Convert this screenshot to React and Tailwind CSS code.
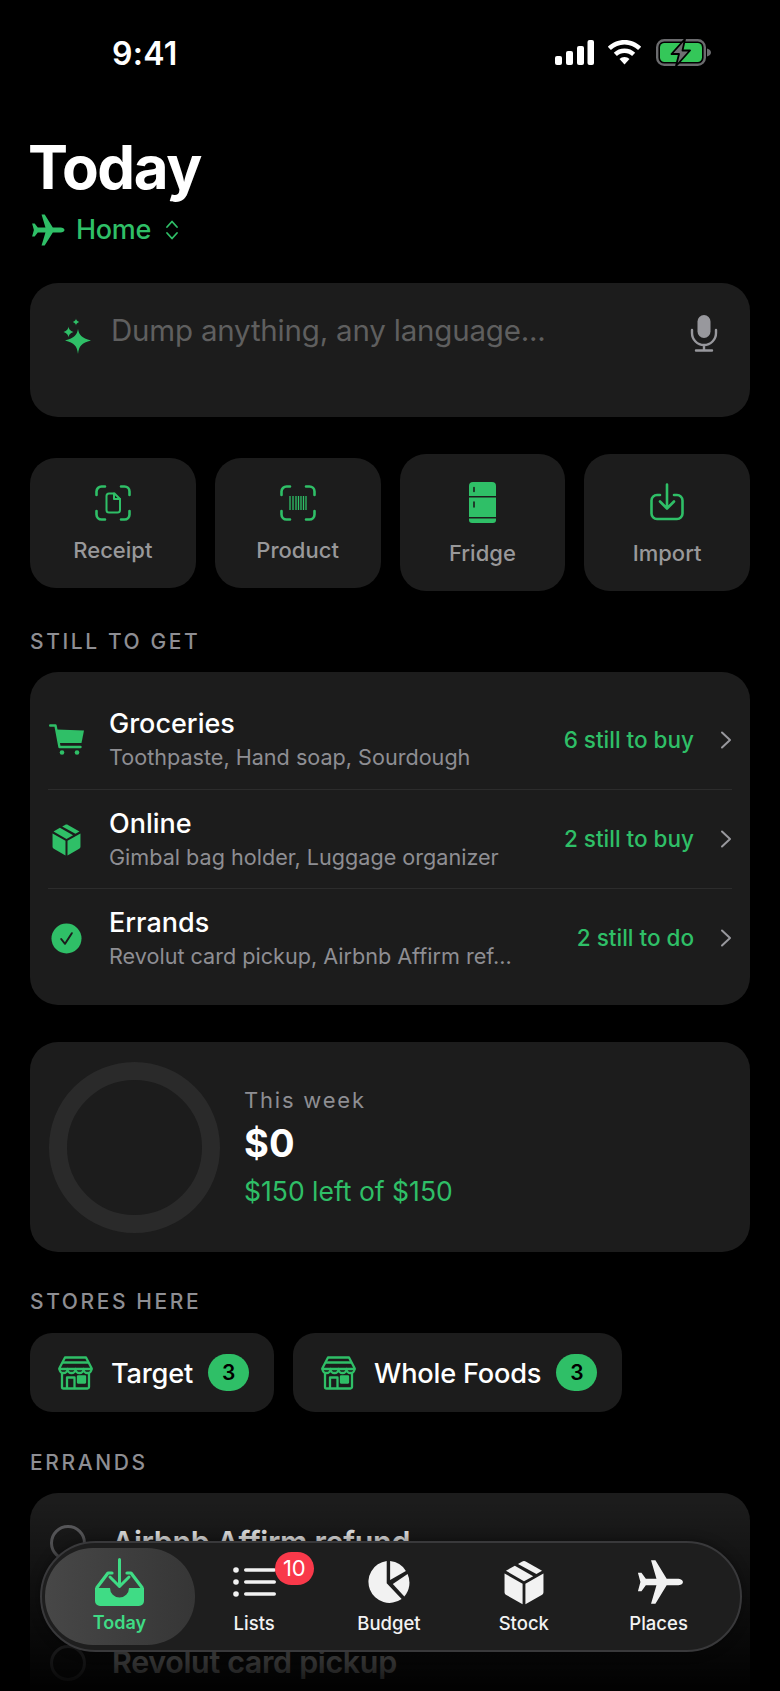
const PLANE = 'M23 12c0-1-1.2-1.6-2.6-1.6h-5.2L9.8 1.6H7.7l2.6 8.8H5.2L3.1 7.6H1.4l1.2 4.4-1.2 4.4h1.7l2.1-2.8h5.1l-2.6 8.8h2.1l5.4-8.8h5.2c1.4 0 2.6-.6 2.6-1.6z'

const Plane = ({ className }) => (
  <svg viewBox="0 0 24 24" className={className} fill="currentColor">
    <path d={PLANE} />
  </svg>
)

const BoxFill = ({ className }) => (
  <svg viewBox="0 0 24 26" className={className} fill="currentColor">
    <path d="M1 8.2l10.2 5.8V25.6L2 20.3c-.7-.4-1-.9-1-1.7z" />
    <path d="M23 8.2l-10.2 5.8V25.6L22 20.3c.7-.4 1-.9 1-1.7z" />
    <path d="M1.8 6.6L6.8 3.8l10.4 5.9-5.2 2.9z" />
    <path d="M8.6 2.8l2.2-1.3c.8-.4 1.600-.4 2.400 0l9 5.100-3.200 1.900z" />
  </svg>
)

const PieFill = ({ className }) => (
  <svg viewBox="0 0 24 24" className={className} fill="currentColor">
    <path d="M10.8 1A11 11 0 1 0 18.6 20.9L10.8 12.6z" />
    <path d="M12.6 1.1A11 11 0 0 1 20.8 6.2L12.6 10.9z" />
    <path d="M21.7 7.8A11 11 0 0 1 20 19.5L14 13z" />
  </svg>
)

const Sparkles = ({ className }) => (
  <svg viewBox="0 0 30 36" className={className} fill="currentColor">
    <path d="M16 11c1 6 3.500 9 13 11.500-9.500 2.500-12 5.500-13 13.500-1-8-3.500-11-13-13.500C12.500 20 15 17 16 11z" />
    <path d="M6.500 8.500c.4 2.700 1.300 4 5 5.500-3.700 1.500-4.600 2.800-5 5.500-.4-2.700-1.300-4-5-5.500 3.700-1.500 4.600-2.800 5-5.500z" />
    <path d="M14 .5c.3 1.800.9 2.600 3.200 3.500-2.300.9-2.900 1.700-3.200 3.500-.3-1.800-.9-2.600-3.200-3.500C13.100 3.100 13.700 2.300 14 .5z" />
  </svg>
)

const Mic = ({ className }) => (
  <svg viewBox="0 0 28 38" className={className} fill="none" stroke="currentColor" strokeWidth="2.400" strokeLinecap="round">
    <rect x="7.500" y="1" width="13" height="23" rx="6.500" fill="currentColor" stroke="none" />
    <path d="M2 16v3a12 12 0 0 0 24 0v-3M14 31v5M6 36.500h16" />
  </svg>
)

const ScanFrame = ({ children, className }) => (
  <svg viewBox="0 0 36 36" className={className} fill="none" stroke="currentColor" strokeWidth="2.600" strokeLinecap="round" strokeLinejoin="round">
    <path d="M10 1.500H6.500a5 5 0 0 0-5 5V10M26 1.500h3.500a5 5 0 0 1 5 5V10M10 34.500H6.500a5 5 0 0 1-5-5V26M26 34.500h3.500a5 5 0 0 0 5-5V26" />
    {children}
  </svg>
)

const Fridge = ({ className }) => (
  <svg viewBox="0 0 27 41" className={className}>
    <path fill="currentColor" d="M4 0h19a4 4 0 0 1 4 4v10H0V4a4 4 0 0 1 4-4z" />
    <path fill="currentColor" d="M0 15.500h27V35H0z" />
    <path fill="currentColor" d="M0 36.500h27V38a3 3 0 0 1-3 3H3a3 3 0 0 1-3-3z" />
    <path stroke="#1c1c1c" strokeWidth="1.600" strokeLinecap="round" d="M5 5.500v4M5 20v5" />
  </svg>
)

const Import = ({ className }) => (
  <svg viewBox="0 0 34 38" className={className} fill="none" stroke="currentColor" strokeWidth="2.600" strokeLinecap="round" strokeLinejoin="round">
    <path d="M10 12H7a5.500 5.500 0 0 0-5.500 5.500v13A5.500 5.500 0 0 0 7 36h20a5.500 5.500 0 0 0 5.500-5.500v-13A5.500 5.500 0 0 0 27 12h-3" />
    <path d="M17 1.500V25M10 18.500l7 7 7-7" />
  </svg>
)

const Cart = ({ className }) => (
  <svg viewBox="0 0 35 31" className={className}>
    <path fill="none" stroke="currentColor" strokeWidth="2.400" strokeLinecap="round" strokeLinejoin="round" d="M1.200 1.500H6.500l4 21.500h21" />
    <path fill="currentColor" d="M7.500 5.500L35 6.500 32.500 19H10z" />
    <circle cx="13" cy="28.500" r="2.300" fill="currentColor" />
    <circle cx="28" cy="28.500" r="2.300" fill="currentColor" />
  </svg>
)

const CheckFill = ({ className }) => (
  <svg viewBox="0 0 32 32" className={className}>
    <circle cx="16" cy="16" r="15.500" fill="currentColor" />
    <path d="M10.500 16.500l4 5 7-11" fill="none" stroke="#1c1c1c" strokeWidth="2" strokeLinecap="round" strokeLinejoin="round" />
  </svg>
)

const Chevron = ({ className }) => (
  <svg viewBox="0 0 12 18" className={className} fill="none" stroke="currentColor" strokeWidth="2" strokeLinecap="round" strokeLinejoin="round">
    <path d="M2 1.500L10 9l-8 7.500" />
  </svg>
)

const Store = ({ className }) => (
  <svg viewBox="0 0 35 34" className={className} fill="none" stroke="currentColor" strokeWidth="2.300" strokeLinecap="round" strokeLinejoin="round">
    <path d="M7 1.500h21l5.500 10.500a2 2 0 0 1 0 1H1.500a2 2 0 0 1 0-1z" />
    <path d="M5 6.500h25" />
    <path d="M1.500 13a4 4 0 0 0 8 0 4 4 0 0 0 8 0 4 4 0 0 0 8 0 4 4 0 0 0 8 0" />
    <path d="M4 17.500V31a1.500 1.500 0 0 0 1.500 1.500h24A1.500 1.500 0 0 0 31 31V17.500" />
    <path d="M9 32V21.500h7.500V32" />
    <rect x="20" y="20.500" width="7" height="6" fill="currentColor" />
  </svg>
)

const InboxFill = ({ className }) => (
  <svg viewBox="0 0 49 48" className={className}>
    <path fill="currentColor" d="M0 30h15a9.500 9.500 0 0 0 19 0h15v13a5 5 0 0 1-5 5H5a5 5 0 0 1-5-5z" />
    <path fill="none" stroke="currentColor" strokeWidth="3.200" strokeLinecap="round" strokeLinejoin="round" d="M17 15h-4L2 29.500M32 15h4l11 14.500" />
    <path fill="none" stroke="currentColor" strokeWidth="3" strokeLinecap="round" strokeLinejoin="round" d="M24.500 1.500V28M15 19l9.500 9.500L34 19" />
  </svg>
)

const ListIcon = ({ className }) => (
  <svg viewBox="0 0 43 30" className={className} fill="currentColor">
    <circle cx="3" cy="3" r="2.800" />
    <circle cx="3" cy="15" r="2.800" />
    <circle cx="3" cy="27" r="2.800" />
    <rect x="11" y="1.300" width="32" height="3.400" rx="1.700" />
    <rect x="11" y="13.300" width="32" height="3.400" rx="1.700" />
    <rect x="11" y="25.300" width="32" height="3.400" rx="1.700" />
  </svg>
)

const StatusIcons = () => (
  <div className="flex items-center mt-[3px] text-white">
    <svg viewBox="0 0 39 25" className="w-[39px] h-[25px]" fill="currentColor">
      <rect x="0" y="16" width="7" height="9" rx="2" />
      <rect x="11" y="11" width="7" height="14" rx="2" />
      <rect x="22" y="6" width="7" height="19" rx="2" />
      <rect x="32.500" y="0" width="6.500" height="25" rx="2" />
    </svg>
    <svg viewBox="0 0 35 25" className="w-[35px] h-[25px] ml-[13px]" fill="currentColor">
      <path d="M17.500 0C11 0 5.200 2.600.8 6.700l3.100 3.200C7.500 6.600 12.300 4.500 17.500 4.500s10 2.100 13.600 5.400l3.100-3.200C29.800 2.600 24 0 17.500 0z" />
      <path d="M17.500 8.500c-4.100 0-7.900 1.600-10.700 4.200l3.100 3.200c2-1.900 4.700-3 7.600-3s5.600 1.100 7.600 3l3.100-3.200c-2.800-2.600-6.600-4.200-10.700-4.200z" />
      <path d="M17.500 17c-2 0-3.700.8-5 2l5 5.500 5-5.500c-1.300-1.200-3-2-5-2z" />
    </svg>
    <svg viewBox="0 0 56 27" className="w-[56px] h-[27px] ml-[14px]">
      <rect x="1.200" y="1.200" width="47.600" height="24.600" rx="7" fill="none" stroke="#6b6b6e" strokeWidth="2.400" />
      <rect x="4" y="4" width="42" height="19" rx="4.500" fill="#34c759" />
      <path d="M51 9.500c2.500.7 4 2.200 4 4s-1.500 3.300-4 4z" fill="#6b6b6e" />
      <path d="M29 0L15.500 15h7.500L20 27l14-15.500h-7.500z" fill="#6f6f72" stroke="#000" strokeWidth="1.800" strokeLinejoin="round" />
    </svg>
  </div>
)

const quickActions = [
  { label: 'Receipt', tall: false },
  { label: 'Product', tall: false },
  { label: 'Fridge', tall: true },
  { label: 'Import', tall: true },
]

const quickIcon = (label) => {
  if (label === 'Receipt') {
    return (
      <ScanFrame className="w-[36px] h-[36px] text-[#2fbf67]">
        <path d="M11.500 11a2.500 2.500 0 0 1 2.500-2.500h5.500L25 14v11a2.500 2.500 0 0 1-2.500 2.500H14a2.500 2.500 0 0 1-2.500-2.500z" strokeWidth="2" />
        <path d="M19 8.500V14h6" strokeWidth="2" />
      </ScanFrame>
    )
  }
  if (label === 'Product') {
    return (
      <ScanFrame className="w-[36px] h-[36px] text-[#2fbf67]">
        <path d="M10 11v14M13 11v14M16 11v14M18.500 11v14M21 11v14M23.500 11v14M26 11v14" strokeWidth="1.300" strokeLinecap="butt" />
      </ScanFrame>
    )
  }
  if (label === 'Fridge') return <Fridge className="w-[27px] h-[41px] text-[#2fbf67]" />
  return <Import className="w-[34px] h-[38px] text-[#2fbf67]" />
}

const stillToGet = [
  { title: 'Groceries', sub: 'Toothpaste, Hand soap, Sourdough', right: '6 still to buy', icon: <Cart className="w-[35px] h-[31px]" /> },
  { title: 'Online', sub: 'Gimbal bag holder, Luggage organizer', right: '2 still to buy', icon: <BoxFill className="ml-[2px] w-[31px] h-[33px]" /> },
  { title: 'Errands', sub: 'Revolut card pickup, Airbnb Affirm ref...', right: '2 still to do', icon: <CheckFill className="ml-[2px] w-[31px] h-[31px]" /> },
]

const tabs = [
  { label: 'Lists', icon: <ListIcon className="w-[43px] h-[30px]" /> },
  { label: 'Budget', icon: <PieFill className="w-[46px] h-[46px]" /> },
  { label: 'Stock', icon: <BoxFill className="w-[44px] h-[46px]" /> },
  { label: 'Places', icon: <Plane className="ml-[3px] w-[50px] h-[50px]" /> },
]

const SectionLabel = ({ children, className }) => (
  <div className={`text-[21px] leading-[20px] tracking-[2.6px] font-medium text-[#8e8e93] ${className}`}>
    {children}
  </div>
)

export default function App() {
  return (
    <div className="relative w-[780px] h-[1691px] overflow-hidden bg-black text-white font-['Inter','Noto_Sans',sans-serif]">
      <div className="flex items-start justify-between pt-[36px] pl-[112px] pr-[68px] h-[135px]">
        <div className="text-[32px] leading-[36px] font-semibold tracking-[0.3px]">9:41</div>
        <StatusIcons />
      </div>

      <div className="px-[30px]">
        <h1 className="-ml-[2px] text-[60px] leading-[65px] font-bold tracking-[-1.400px]">Today</h1>
        <div className="flex items-center h-[30px] mt-[15px] text-[#2fbf67]">
          <Plane className="w-[36px] h-[36px]" />
          <span className="ml-[10px] text-[27px] font-medium tracking-[-0.300px]">Home</span>
          <svg viewBox="0 0 14 20" className="w-[14px] h-[20px] ml-[14px]" fill="none" stroke="currentColor" strokeWidth="1.800" strokeLinecap="round" strokeLinejoin="round">
            <path d="M2 7l5-5.500L12 7M2 13l5 5.500 5-5.500" />
          </svg>
        </div>

        <div className="flex items-start justify-between h-[134px] mt-[38px] rounded-[28px] bg-[#1c1c1c] pt-[29px] pl-[32px] pr-[32px]">
          <div className="flex items-start">
            <Sparkles className="w-[30px] h-[36px] text-[#2fbf67] mt-[6px]" />
            <span className="ml-[19px] text-[29.500px] leading-[36px] text-[#5f5f5f] tracking-[-0.200px]">Dump anything, any language...</span>
          </div>
          <Mic className="w-[28px] h-[38px] text-[#98989d] mt-[2px]" />
        </div>

        <div className="grid grid-cols-4 gap-[19px] h-[137px] mt-[37px] items-center">
          {quickActions.map((a) => (
            <div
              key={a.label}
              className={`flex flex-col items-center rounded-[26px] bg-[#1c1c1c] ${a.tall ? 'h-[137px] pt-[27px]' : 'h-[130px] pt-[24px]'}`}
            >
              <div className="flex items-center justify-center h-[42px]">{quickIcon(a.label)}</div>
              <div className={`text-[22px] leading-[28px] font-medium text-[#98989a] ${a.tall ? 'mt-[16px]' : 'mt-[12px]'}`}>{a.label}</div>
            </div>
          ))}
        </div>

        <SectionLabel className="mt-[41px]">STILL TO GET</SectionLabel>

        <div className="mt-[20px] h-[333px] rounded-[28px] bg-[#1c1c1c] px-[18px] pt-[18px]">
          {stillToGet.map((row, i) => (
            <div
              key={row.title}
              className={`flex items-center h-[99px] ${i > 0 ? 'border-t border-[#2c2c2c]' : ''}`}
            >
              <div className="w-[61px] pl-[1px] flex justify-start text-[#2fbf67]">{row.icon}</div>
              <div className="flex-1 min-w-0">
                <div className="text-[27px] leading-[32px] font-medium">{row.title}</div>
                <div className="text-[21.600px] leading-[28px] mt-[3px] text-[#8e8e93] whitespace-nowrap">{row.sub}</div>
              </div>
              <div className="text-[22.500px] font-medium text-[#2fbf67]">{row.right}</div>
              <Chevron className="w-[12px] h-[18px] ml-[26px] text-[#98989d]" />
            </div>
          ))}
        </div>

        <div className="flex items-center h-[210px] mt-[37px] rounded-[28px] bg-[#1c1c1c] pl-[19px]">
          <div className="w-[171px] h-[171px] rounded-full border-[18px] border-[#2a2a2a]" />
          <div className="ml-[24px] -mt-[2px]">
            <div className="text-[22px] leading-[28px] tracking-[1.800px] text-[#8e8e93]">This week</div>
            <div className="text-[38px] leading-[44px] mt-[7px] font-bold">$0</div>
            <div className="text-[26.500px] leading-[32px] mt-[10px] text-[#2fbf67]">$150 left of $150</div>
          </div>
        </div>

        <SectionLabel className="mt-[40px]">STORES HERE</SectionLabel>

        <div className="flex gap-[19px] mt-[21px]">
          {['Target', 'Whole Foods'].map((s) => (
            <div key={s} className="flex items-center h-[79px] rounded-[22px] bg-[#1c1c1c] pl-[28px] pr-[25px]">
              <Store className="w-[35px] h-[34px] text-[#2fbf67]" />
              <span className="ml-[18px] mt-[3px] text-[27.200px] font-medium tracking-[-0.200px]">{s}</span>
              <span className="ml-[15px] flex items-center justify-center w-[41px] h-[37px] rounded-full bg-[#2fbf67] text-[21px] font-semibold text-black">3</span>
            </div>
          ))}
        </div>

        <SectionLabel className="mt-[41px]">ERRANDS</SectionLabel>

        <div className="mt-[20px] h-[260px] rounded-[28px] bg-[#1c1c1c] pt-[20px] pl-[20px]">
          {['Airbnb Affirm refund', '', 'Revolut card pickup'].map((t, i) => (
            <div key={i} className="flex items-center h-[60px]">
              <div className="w-[36px] h-[36px] rounded-full border-[3px] border-[#636366]" />
              <span className="ml-[26px] text-[30.400px] font-semibold tracking-[-0.300px]">{t}</span>
            </div>
          ))}
        </div>
      </div>

      <div className="absolute left-0 right-0 top-[1500px] h-[191px] bg-gradient-to-b from-transparent to-black/95" />

      <div className="absolute left-[40px] top-[1541px] w-[702px] h-[111px] rounded-[56px] border-2 border-[#39393b] bg-[#1e1e1e] pl-[10px] pr-[14px] grid grid-cols-5 shadow-[0_0_12px_rgba(0,0,0,0.4)]">
        <div className="relative flex flex-col items-center">
          <div className="absolute -left-[7px] top-[5px] w-[150px] h-[97px] rounded-[48px] bg-gradient-to-r from-[#474747] to-[#363636]" />
          <InboxFill className="relative w-[49px] h-[48px] mt-[15px] text-[#3fdc85]" />
          <span className="relative mt-[5px] text-[18px] leading-[24px] font-semibold text-[#3fdc85]">Today</span>
        </div>
        {tabs.map((t) => (
          <div key={t.label} className="relative flex flex-col items-center">
            <div className="flex items-center justify-center h-[48px] mt-[15px] text-[#f2f2f2]">{t.icon}</div>
            {t.label === 'Lists' && (
              <span className="absolute left-[88px] top-[9px] flex items-center justify-center w-[39px] h-[33px] rounded-full bg-[#f9394a] text-[22px] text-white">10</span>
            )}
            <span className="mt-[5px] text-[18.500px] leading-[24px] font-medium text-[#f2f2f2]">{t.label}</span>
          </div>
        ))}
      </div>
    </div>
  )
}
